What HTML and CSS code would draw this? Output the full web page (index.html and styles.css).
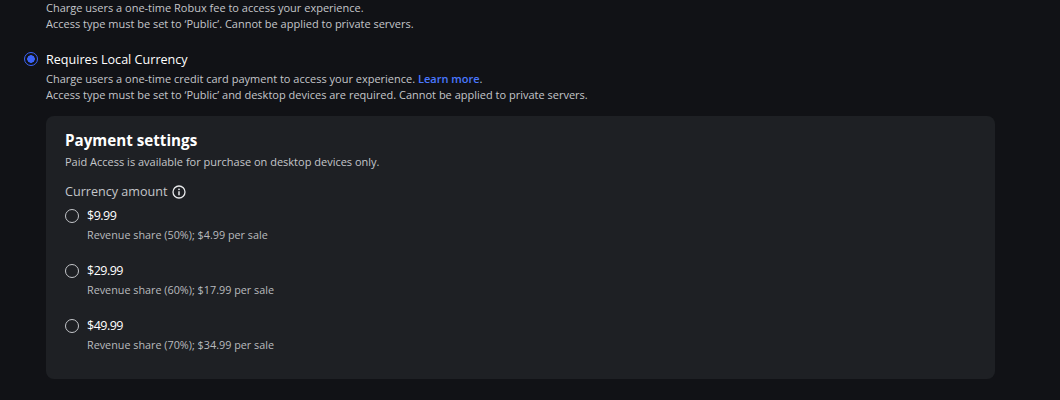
FILE: index.html
```html
<!DOCTYPE html>
<html lang="en">
<head>
<meta charset="utf-8">
<title>Payment settings</title>
<link rel="stylesheet" href="styles.css">
</head>
<body>
<main class="page">
  <div class="desc desc-top">
    <p>Charge users a one-time Robux fee to access your experience.</p>
    <p>Access type must be set to ‘Public’. Cannot be applied to private servers.</p>
  </div>
  <section class="option">
    <span class="radio radio-on"></span>
    <div class="option-body">
      <div class="option-title">Requires Local Currency</div>
      <div class="desc">
        <p>Charge users a one-time credit card payment to access your experience. <a href="#" class="link">Learn more</a>.</p>
        <p>Access type must be set to ‘Public’ and desktop devices are required. Cannot be applied to private servers.</p>
      </div>
    </div>
  </section>
  <section class="card">
    <h2 class="card-title">Payment settings</h2>
    <p class="card-sub">Paid Access is available for purchase on desktop devices only.</p>
    <div class="amount-label">
      <span>Currency amount</span>
      <svg class="info" width="14" height="14" viewBox="0 0 14 14" fill="none" aria-hidden="true">
        <circle cx="7" cy="7" r="6" stroke="#e8e9eb" stroke-width="1.3"/>
        <circle cx="7" cy="4.3" r="0.9" fill="#e8e9eb"/>
        <path d="M7 6.2v4" stroke="#e8e9eb" stroke-width="1.5"/>
      </svg>
    </div>
    <div class="price-list">
      <div class="price">
        <span class="radio"></span>
        <div>
          <div class="price-value">$9.99</div>
          <div class="price-note">Revenue share (50%); $4.99 per sale</div>
        </div>
      </div>
      <div class="price">
        <span class="radio"></span>
        <div>
          <div class="price-value">$29.99</div>
          <div class="price-note">Revenue share (60%); $17.99 per sale</div>
        </div>
      </div>
      <div class="price">
        <span class="radio"></span>
        <div>
          <div class="price-value">$49.99</div>
          <div class="price-note">Revenue share (70%); $34.99 per sale</div>
        </div>
      </div>
    </div>
  </section>
</main>
</body>
</html>
```
FILE: styles.css
```css
* { box-sizing: border-box; }
html, body { margin: 0; height: 100%; }
body {
  background: #111216;
  color: #fff;
  font-family: "Open Sans", "Liberation Sans", sans-serif;
  overflow: hidden;
}
p { margin: 0; }
.page { padding: 0 65px 0 24px; }
.desc { font-size: 11px; line-height: 16px; color: #c4c6ca; }
.desc-top { padding-left: 22px; }
.option { display: flex; gap: 8px; margin-top: 18px; }
.radio {
  flex: none;
  width: 14px;
  height: 14px;
  margin-top: 2px;
  border-radius: 50%;
  border: 1.5px solid #c4c6ca;
}
.radio-on {
  border-color: #3c64fa;
  background: radial-gradient(circle, #3c64fa 0 3.5px, transparent 4px);
}
.option-title { font-size: 12.6px; line-height: 18px; padding-top: 1px; margin-bottom: 2px; }
.link { color: #4a78ff; text-decoration: none; font-weight: 600; }
.card {
  margin: 13px 0 0 22px;
  height: 263px;
  padding: 14px 19px;
  background: #1e2024;
  border-radius: 8px;
}
.card-title { margin: 0; font-size: 15.2px; line-height: 20px; font-weight: 700; }
.card-sub { margin-top: 4px; font-size: 11px; line-height: 15px; color: #c4c6ca; }
.amount-label {
  display: flex;
  align-items: center;
  gap: 4px;
  margin-top: 15px;
  font-size: 12.6px;
  line-height: 16px;
  color: #c4c6ca;
}
.price-list { display: flex; flex-direction: column; gap: 18px; margin-top: 7px; }
.price { display: flex; gap: 8px; height: 37px; }
.price-value { font-size: 12.5px; line-height: 17px; color: #fff; letter-spacing: -0.5px; }
.price-note { margin-top: 3px; font-size: 10.8px; line-height: 16px; color: #b9bbbe; }
```
